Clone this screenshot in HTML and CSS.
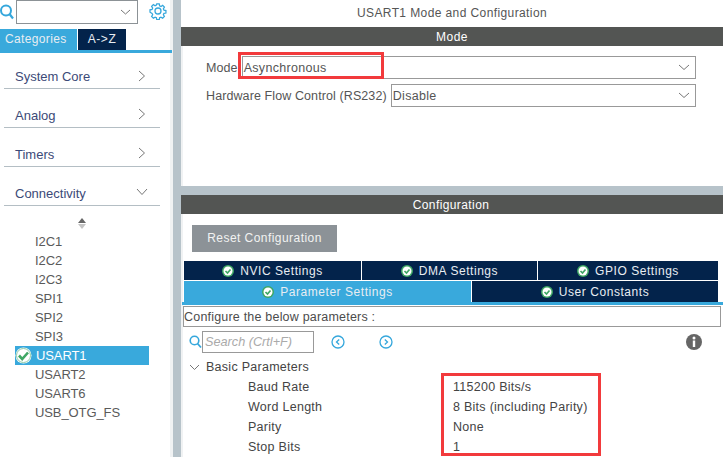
FILE: index.html
```html
<!doctype html>
<html lang="en">
<head>
  <meta charset="UTF-8">
  <title>USART1 Mode and Configuration</title>
  <link rel="stylesheet" href="styles.css">
</head>
<body>
  <div class="app">
    <div class="side">
      <div class="side-top">
        <svg class="ico-search" width="15" height="16" viewBox="0 0 15 16"><circle cx="6" cy="6.5" r="5" fill="none" stroke="#35a7dc" stroke-width="2"/><path d="M9.500 10l3.500 4.500" stroke="#35a7dc" stroke-width="2.200" fill="none"/></svg>
        <div class="side-select">
          <svg width="11" height="6" viewBox="0 0 11 6"><path d="M1 1l4.500 4L10 1" stroke="#777" fill="none"/></svg>
        </div>
        <svg class="ico-gear" width="18" height="18" viewBox="0 0 18 18"><circle cx="9" cy="9" r="3" fill="none" stroke="#35a7dc" stroke-width="1.300"/><path d="M7.600 1h2.800l.4 2.200 1.500.7 1.900-1.200 2 2-1.200 1.900.7 1.500 2.200.4v2.800l-2.200.4-.7 1.500 1.200 1.900-2 2-1.900-1.200-1.500.7-.4 2.200H7.600l-.4-2.200-1.500-.7-1.900 1.200-2-2 1.200-1.900-.7-1.500L0 10.400V7.600l2.300-.4.7-1.500-1.200-1.900 2-2 1.900 1.200 1.500-.7z" transform="translate(1 1) scale(.89)" fill="none" stroke="#35a7dc" stroke-width="1.400"/></svg>
      </div>
      <div class="side-tabs">
        <div class="side-tab side-tab-on">Categories</div>
        <div class="side-tab">A-&gt;Z</div>
      </div>
      <div class="groups">
        <div class="group">System Core<svg width="8" height="12" viewBox="0 0 8 12"><path d="M1 1l5.500 5L1 11" stroke="#777" fill="none"/></svg></div>
        <div class="group">Analog<svg width="8" height="12" viewBox="0 0 8 12"><path d="M1 1l5.500 5L1 11" stroke="#777" fill="none"/></svg></div>
        <div class="group">Timers<svg width="8" height="12" viewBox="0 0 8 12"><path d="M1 1l5.500 5L1 11" stroke="#777" fill="none"/></svg></div>
        <div class="group">Connectivity<svg class="open" width="12" height="8" viewBox="0 0 12 8"><path d="M1 1l5 5.500L11 1" stroke="#777" fill="none"/></svg></div>
      </div>
      <div class="sorter"><i class="sort-up"></i><i class="sort-down"></i></div>
      <ul class="peri">
        <li>I2C1</li>
        <li>I2C2</li>
        <li>I2C3</li>
        <li>SPI1</li>
        <li>SPI2</li>
        <li>SPI3</li>
        <li class="peri-on">
          <svg width="17" height="17" viewBox="0 0 17 17"><circle cx="8.500" cy="8.500" r="8" fill="#fff"/><circle cx="8.500" cy="8.500" r="7" fill="#fff" stroke="#8fcba4" stroke-width="1"/><path d="M4 8.500l3.200 3.500L13 5.500" stroke="#3fa764" stroke-width="2.600" fill="none"/></svg>USART1</li>
        <li>USART2</li>
        <li>USART6</li>
        <li>USB_OTG_FS</li>
      </ul>
    </div>
    <div class="main">
      <div class="main-title">USART1 Mode and Configuration</div>
      <div class="bar">Mode</div>
      <div class="mode">
        <div class="mode-row">
          <span class="mode-label">Mode</span>
          <div class="drop">Asynchronous<svg width="12" height="7" viewBox="0 0 12 7"><path d="M1 1l5 4.500L11 1" stroke="#777" fill="none"/></svg></div>
        </div>
        <div class="mode-row">
          <span class="mode-label">Hardware Flow Control (RS232)</span>
          <div class="drop">Disable<svg width="12" height="7" viewBox="0 0 12 7"><path d="M1 1l5 4.500L11 1" stroke="#777" fill="none"/></svg></div>
        </div>
        <div class="mark mark-mode"></div>
      </div>
      <div class="bar bar-conf">Configuration</div>
      <div class="conf">
        <div class="reset">Reset Configuration</div>
        <div class="tabs tabs-top">
          <div class="tab"><svg class="ok" width="12" height="12" viewBox="0 0 12 12"><circle cx="6" cy="6" r="6" fill="#3fa764"/><circle cx="6" cy="6" r="4.500" fill="#fff"/><path d="M3.500 6l2 2 3-3.500" stroke="#3fa764" stroke-width="1.700" fill="none"/></svg>NVIC Settings</div>
          <div class="tab"><svg class="ok" width="12" height="12" viewBox="0 0 12 12"><circle cx="6" cy="6" r="6" fill="#3fa764"/><circle cx="6" cy="6" r="4.500" fill="#fff"/><path d="M3.500 6l2 2 3-3.500" stroke="#3fa764" stroke-width="1.700" fill="none"/></svg>DMA Settings</div>
          <div class="tab"><svg class="ok" width="12" height="12" viewBox="0 0 12 12"><circle cx="6" cy="6" r="6" fill="#3fa764"/><circle cx="6" cy="6" r="4.500" fill="#fff"/><path d="M3.500 6l2 2 3-3.500" stroke="#3fa764" stroke-width="1.700" fill="none"/></svg>GPIO Settings</div>
        </div>
        <div class="tabs tabs-bottom">
          <div class="tab tab-on"><svg class="ok" width="12" height="12" viewBox="0 0 12 12"><circle cx="6" cy="6" r="6" fill="#3fa764"/><circle cx="6" cy="6" r="4.500" fill="#fff"/><path d="M3.500 6l2 2 3-3.500" stroke="#3fa764" stroke-width="1.700" fill="none"/></svg>Parameter Settings</div>
          <div class="tab"><svg class="ok" width="12" height="12" viewBox="0 0 12 12"><circle cx="6" cy="6" r="6" fill="#3fa764"/><circle cx="6" cy="6" r="4.500" fill="#fff"/><path d="M3.500 6l2 2 3-3.500" stroke="#3fa764" stroke-width="1.700" fill="none"/></svg>User Constants</div>
        </div>
        <div class="tabs-line"></div>
        <div class="hint">Configure the below parameters :</div>
        <div class="search-row">
          <svg width="13" height="14" viewBox="0 0 13 14"><circle cx="5.500" cy="5.500" r="4.300" fill="none" stroke="#35a7dc" stroke-width="1.600"/><path d="M8.500 8.500l3.500 4" stroke="#35a7dc" stroke-width="1.800" fill="none"/></svg>
          <div class="search">Search (Crtl+F)</div>
          <svg class="nav nav-prev" width="14" height="14" viewBox="0 0 14 14"><circle cx="7" cy="7" r="6" fill="none" stroke="#35a7dc" stroke-width="1.300"/><path d="M8.200 4.500L5.500 7l2.700 2.500" fill="none" stroke="#35a7dc" stroke-width="1.300"/></svg>
          <svg class="nav nav-next" width="14" height="14" viewBox="0 0 14 14"><circle cx="7" cy="7" r="6" fill="none" stroke="#35a7dc" stroke-width="1.300"/><path d="M5.800 4.500L8.500 7l-2.700 2.500" fill="none" stroke="#35a7dc" stroke-width="1.300"/></svg>
          <svg class="info" width="16" height="16" viewBox="0 0 16 16"><circle cx="8" cy="8" r="8" fill="#666"/><circle cx="8" cy="4" r="1.500" fill="#fff"/><rect x="6.800" y="6.500" width="2.400" height="6.500" fill="#fff"/></svg>
        </div>
        <div class="params-head">
          <svg width="11" height="7" viewBox="0 0 11 7"><path d="M1 1l4.500 4.500L10 1" stroke="#777" fill="none"/></svg>
          Basic Parameters
        </div>
        <div class="param"><span class="param-name">Baud Rate</span><span>115200 Bits/s</span></div>
        <div class="param"><span class="param-name">Word Length</span><span>8 Bits (including Parity)</span></div>
        <div class="param"><span class="param-name">Parity</span><span>None</span></div>
        <div class="param"><span class="param-name">Stop Bits</span><span>1</span></div>
        <div class="mark mark-params"></div>
      </div>
    </div>
  </div>
</body>
</html>
```

FILE: styles.css
```css
html, body {
  margin: 0;
  padding: 0;
  height: 100%;
  overflow: hidden;
}

body {
  background: #fff;
  color: #444;
  font-family: "Liberation Sans", Arial, sans-serif;
  font-size: 12px;
}

ul, li {
  margin: 0;
  padding: 0;
  list-style: none;
}

.app {
  display: flex;
  height: 457px;
}

/* left column */
.side {
  width: 173px;
  flex: none;
  box-sizing: border-box;
  border-right: 3px solid #f0f2f3;
}

.side-top {
  display: flex;
  align-items: flex-start;
  height: 29px;
}

.ico-search {
  margin-top: 4px;
  margin-right: 1px;
}

.side-select {
  width: 122px;
  height: 24px;
  box-sizing: border-box;
  border: 1px solid #8c9296;
  display: flex;
  align-items: center;
  justify-content: flex-end;
  padding-right: 6px;
}

.ico-gear {
  margin-top: 2px;
  margin-left: 11px;
}

.side-tabs {
  display: flex;
  height: 21px;
  border-bottom: 3px solid #39a9dc;
  width: 172px;
}

.side-tab {
  width: 48px;
  background: #03234b;
  color: #e8edf2;
  line-height: 21px;
  text-align: center;
  letter-spacing: .6px;
}

.side-tab-on {
  width: 72px;
  margin-right: 1px;
  padding-left: 5px;
  background: #39a9dc;
  text-align: left;
  letter-spacing: .35px;
}

.groups {
  padding: 0 4px;
}

.group {
  height: 39px;
  box-sizing: border-box;
  width: 156px;
  border-bottom: 1px solid #b4bec4;
  padding: 19px 14px 0 11px;
  color: #3c4a78;
  font-size: 13px;
  line-height: 15px;
  display: flex;
  justify-content: space-between;
}

.group:first-child {
  height: 36px;
  padding-top: 16px;
}

.group:first-child svg {
  margin-top: 1px;
}

.group svg.open {
  margin-top: 2px;
  margin-right: -2px;
}

.sorter {
  width: 8px;
  margin: 12px 0 0 78px;
}

.sort-up, .sort-down {
  display: block;
  width: 0;
  height: 0;
  border-left: 4px solid transparent;
  border-right: 4px solid transparent;
}

.sort-up {
  border-bottom: 5px solid #666;
  margin-bottom: 1px;
}

.sort-down {
  border-top: 5px solid #c4c4c4;
}

.peri {
  margin-top: 3px;
}

.peri li {
  height: 19px;
  line-height: 19px;
  padding-left: 35px;
  color: #5a5a5a;
  font-size: 13px;
  letter-spacing: -.1px;
}

.peri .peri-on {
  width: 134px;
  margin-left: 15px;
  padding-left: 21px;
  box-sizing: border-box;
  background: #39a9dc;
  color: #fff;
  position: relative;
}

.peri-on svg {
  position: absolute;
  left: 0;
  top: 1px;
}

/* right column */
.main {
  flex: 1;
  min-width: 0;
  border-left: 8px solid #b7c3ca;
}

.main-title {
  height: 27px;
  line-height: 26px;
  text-align: center;
  color: #555;
  letter-spacing: .4px;
}

.bar {
  height: 19px;
  line-height: 21px;
  background: #535553;
  color: #fff;
  text-align: center;
  letter-spacing: .5px;
}

.mode {
  height: 140px;
  padding: 10px 0 0 25px;
  box-sizing: border-box;
  position: relative;
  box-shadow: inset 2px 0 #f0f2f3;
}

.mode-row {
  display: flex;
  align-items: center;
  height: 23px;
  margin-bottom: 5px;
  font-size: 12.500px;
  color: #555;
}

.mode-label {
  margin-right: 4px;
  white-space: nowrap;
  letter-spacing: .1px;
}

.drop {
  flex: 1;
  margin-right: 27px;
  height: 23px;
  box-sizing: border-box;
  border: 1px solid #999;
  padding: 0 5px 0 1px;
  display: flex;
  align-items: center;
  justify-content: space-between;
  letter-spacing: .3px;
}

.mark {
  position: absolute;
  border: 3px solid #f23a3c;
  box-sizing: border-box;
}

.mark-mode {
  left: 57px;
  top: 6px;
  width: 146px;
  height: 27px;
}

.bar-conf {
  border-top: 9px solid #b7c3ca;
  height: 28px;
  box-sizing: border-box;
  letter-spacing: .4px;
  padding-right: 2px;
}

.conf {
  position: relative;
  padding-top: 11px;
  height: 243px;
  box-sizing: border-box;
  box-shadow: inset 2px 0 #f0f2f3;
}

.reset {
  width: 145px;
  height: 27px;
  margin-left: 11px;
  background: #8c9297;
  color: #f2f2f2;
  text-align: center;
  line-height: 27px;
  letter-spacing: .45px;
}

.tabs {
  display: grid;
  margin-left: 3px;
  width: 534px;
}

.tabs-top {
  grid-template-columns: 178px 176px 180px;
  margin-top: 9px;
  height: 19px;
}

.tabs-bottom {
  grid-template-columns: 288px 246px;
  margin-top: 1px;
  height: 21px;
}

.tab {
  background: #03234b;
  color: #e8edf2;
  border-right: 1px solid #fff;
  display: flex;
  align-items: center;
  justify-content: center;
  letter-spacing: .55px;
}

.tab:last-child {
  border-right: 0;
}

.tab-on {
  background: #39a9dc;
}

.ok {
  margin-right: 6px;
}

.tabs-line {
  height: 3px;
  background: #39a9dc;
  margin-left: 1px;
  width: 541px;
}

.hint {
  margin: 1px 0 0 2px;
  width: 538px;
  height: 21px;
  box-sizing: border-box;
  border: 1px solid #999;
  line-height: 21px;
  font-size: 12.500px;
  letter-spacing: .2px;
  color: #4c4c4c;
}

.search-row {
  display: flex;
  align-items: center;
  height: 22px;
  margin-top: 4px;
  padding-left: 8px;
}

.search {
  width: 112px;
  height: 22px;
  box-sizing: border-box;
  border: 1px solid #999;
  padding-left: 2px;
  line-height: 20px;
  color: #aaa;
  font-size: 12.700px;
  font-style: italic;
}

.nav-prev {
  margin-left: 17px;
}

.nav-next {
  margin-left: 34px;
}

.info {
  margin-left: auto;
  margin-right: 21px;
}

.params-head {
  display: flex;
  align-items: center;
  gap: 6px;
  height: 20px;
  margin-top: 4px;
  padding-left: 8px;
  color: #444;
  font-size: 12.500px;
  letter-spacing: .27px;
}

.param {
  display: flex;
  height: 20px;
  line-height: 20px;
  padding-left: 67px;
  font-size: 12.500px;
  letter-spacing: .27px;
}

.param-name {
  width: 205px;
}

.mark-params {
  left: 260px;
  top: 159px;
  width: 160px;
  height: 83px;
}
```
